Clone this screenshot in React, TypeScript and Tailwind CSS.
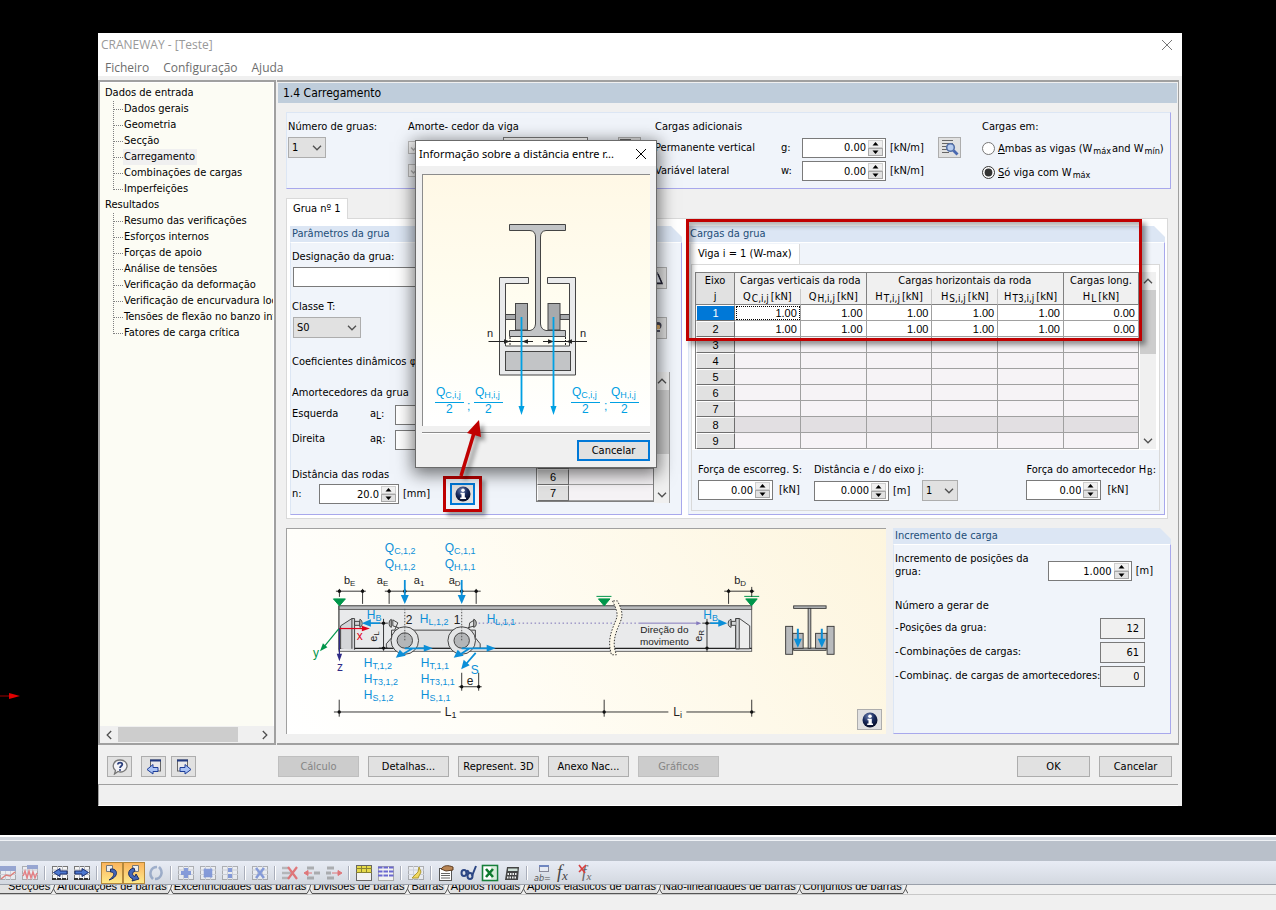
import { Fragment, useState } from "react";
import type { ReactNode } from "react";
import clsx from "clsx";

const inputNodes = ["Dados gerais", "Geometria", "Secção", "Carregamento", "Combinações de cargas", "Imperfeições"];
const resultNodes = [
  "Resumo das verificações",
  "Esforços internos",
  "Forças de apoio",
  "Análise de tensões",
  "Verificação da deformação",
  "Verificação de encurvadura local",
  "Tensões de flexão no banzo inf",
  "Fatores de carga crítica",
];

const axisColumns = [
  { name: "Q", sub: "C,i,j" },
  { name: "Q", sub: "H,i,j" },
  { name: "H", sub: "T,i,j" },
  { name: "H", sub: "S,i,j" },
  { name: "H", sub: "T3,i,j" },
  { name: "H", sub: "L" },
];

const axisRows = [
  ["1.00", "1.00", "1.00", "1.00", "1.00", "0.00"],
  ["1.00", "1.00", "1.00", "1.00", "1.00", "0.00"],
];

const sheetTabs = [
  "Secções",
  "Articulações de barras",
  "Excentricidades das barras",
  "Divisões de barras",
  "Barras",
  "Apoios nodais",
  "Apoios elásticos de barras",
  "Não-linearidades de barras",
  "Conjuntos de barras",
];

const face = "border border-[#adadad] bg-[#e1e1e1]";

function Chevron({ className }: { className?: string }) {
  return (
    <svg viewBox="0 0 10 6" className={clsx("w-[10px] h-[6px]", className)}>
      <path d="M1 0.8 L5 4.8 L9 0.8" fill="none" stroke="#505050" strokeWidth="1.3" />
    </svg>
  );
}

function Group({ title, className, children }: { title: string; className?: string; children: ReactNode }) {
  return (
    <fieldset className={clsx("relative flex min-w-0 flex-col", className)}>
      <h3 className="h-4 shrink-0 bg-[#dce6f4] px-[2px] text-[11px] leading-4 text-[#1e4e79] [clip-path:polygon(0_0,calc(100%-11px)_0,100%_11px,100%_100%,0_100%)]">
        {title}
      </h3>
      <div className="flex-1 border-r border-b border-l border-t border-t-white border-r-[#a8a8ec] border-b-[#a8a8ec] border-l-[#dce6f4] bg-[#f0f4fa]">
        {children}
      </div>
    </fieldset>
  );
}

function NumberField({ id, value, label, className }: { id: string; value: string; label?: string; className: string }) {
  const [text, setText] = useState(value);
  const step = (delta: number) => {
    const digits = text.split(".")[1]?.length ?? 0;
    setText((Number(text) + delta).toFixed(digits));
  };
  return (
    <div className={clsx("flex h-5 shrink-0 items-center border border-[#7a7a7a] bg-white pr-[2px]", className)}>
      <input
        id={id}
        aria-label={label}
        value={text}
        onChange={(e) => setText(e.target.value)}
        className="h-full w-0 min-w-0 flex-1 pr-[2px] text-right outline-none"
      />
      <div className="flex h-4 w-[15px] flex-col">
        <button type="button" aria-label="Aumentar" onClick={() => step(1)} className="flex h-2 items-center justify-center border border-[#cfcfcf] bg-[#f0f0f0]">
          <svg viewBox="0 0 7 4" className="h-1 w-[7px]"><path d="M3.5 0 L6.5 3.5 H0.5Z" fill="#000" /></svg>
        </button>
        <button type="button" aria-label="Diminuir" onClick={() => step(-1)} className="flex h-2 items-center justify-center border border-[#a8a8a8] bg-[#e1e1e1]">
          <svg viewBox="0 0 7 4" className="h-1 w-[7px]"><path d="M3.5 4 L6.5 0.5 H0.5Z" fill="#000" /></svg>
        </button>
      </div>
    </div>
  );
}

function Dropdown({ id, options, label, className }: { id: string; options: string[]; label?: string; className: string }) {
  return (
    <div className={clsx("relative h-[21px] shrink-0", className)}>
      <select id={id} aria-label={label} className={clsx("h-full w-full appearance-none pl-[3px] outline-none", face)}>
        {options.map((o) => (
          <option key={o}>{o}</option>
        ))}
      </select>
      <Chevron className="pointer-events-none absolute top-2 right-1" />
    </div>
  );
}

function DisabledCheck({ label, className }: { label: string; className?: string }) {
  return (
    <div className={clsx("relative size-[13px]", className)}>
      <input type="checkbox" aria-label={label} defaultChecked disabled className="block size-[13px] appearance-none border border-[#bcbcbc] bg-[#f6f6f6]" />
      <svg viewBox="0 0 13 13" className="absolute inset-0 size-[13px]"><path d="M3 6.5L5.5 9L10.500 4" fill="none" stroke="#b0b0b0" strokeWidth="1.400" /></svg>
    </div>
  );
}

function InfoIcon() {
  return (
    <svg viewBox="0 0 16 16" className="size-4">
      <defs>
        <radialGradient id="infoBall" cx="0.4" cy="0.25" r="0.8">
          <stop offset="0" stopColor="#6a7fb0" />
          <stop offset="0.5" stopColor="#182a5c" />
          <stop offset="1" stopColor="#050a20" />
        </radialGradient>
      </defs>
      <circle cx="8" cy="8" r="7.5" fill="url(#infoBall)" />
      <circle cx="8" cy="4.2" r="1.8" fill="#fff" />
      <path d="M5.500 6.800H9.800V11.500H11V13H5.200V11.500H6.500V8.200H5.500Z" fill="#fff" />
    </svg>
  );
}

function LoupeIcon() {
  return (
    <svg viewBox="0 0 18 17" className="h-[17px] w-[18px]">
      <path d="M1 1.500H12M1 4.500H12M1 7.500H7M1 10.500H6M1 13.500H8" stroke="#666" strokeWidth="1.200" />
      <circle cx="9.500" cy="8.500" r="3.800" fill="#b7cdf0" stroke="#5470a8" strokeWidth="1.600" />
      <path d="M12.500 11.500L16.500 15.500" stroke="#4968b0" strokeWidth="2.800" />
    </svg>
  );
}

function TreeBranch({ title, items }: { title: string; items: string[] }) {
  return (
    <li>
      <a href="#" className="block h-4 pl-[5px]">{title}</a>
      <ul className="pl-3">
        {items.map((item, i) => (
          <li key={item} className="flex h-4">
            <svg viewBox="0 0 11 16" className="h-4 w-[11px] shrink-0" stroke="#808080" strokeDasharray="1 1">
              <path d={i === items.length - 1 ? "M1.5 0V9" : "M1.5 0V16"} />
              <path d="M2 8.5H11" />
            </svg>
            <a href="#" className={clsx("px-px whitespace-nowrap", item === "Carregamento" && "bg-[#f0f0f0] pr-[2px]")}>{item}</a>
          </li>
        ))}
      </ul>
    </li>
  );
}

function Sym({ x, y, name, sub, fill, size = 12 }: { x: number; y: number; name: string; sub?: string; fill?: string; size?: number }) {
  return (
    <text x={x} y={y} fontSize={size} fill={fill}>
      {name}
      {sub && <tspan fontSize={size - 3} dy="2">{sub}</tspan>}
    </text>
  );
}

const blue = "#0c8fd8";

function CranewayDrawing() {
  return (
    <svg viewBox="0 0 600 205" preserveAspectRatio="xMinYMin meet" className="h-[205px] w-full" fontFamily="Liberation Sans, Arial, sans-serif" fill="#222">
      {/* runway beam */}
      <rect x="52" y="77" width="413.5" height="45.5" fill="#e9eaeb" stroke="#444" strokeWidth="0.8" />
      <rect x="52" y="77" width="413.5" height="3.5" fill="#b9bbbd" stroke="#444" strokeWidth="0.8" />
      <path d="M52 119.5H465.5" stroke="#222" strokeWidth="1.2" />
      <path d="M188 94.3H352" stroke="#7c72b8" strokeDasharray="1.5 2.5" />
      <path d="M352 94.3H411" stroke="#8478bd" />
      <path d="M415 94.3L410 92.3V96.3Z" fill="#8478bd" />
      <path d="M326 72C334 88 330 88 326 100C323 108 322 116 325 126L330 126C326 116 328 108 331 100C336 88 338 86 331 72Z" fill="#fdf8e8" stroke="#333" strokeDasharray="1.5 1.5" />

      {/* end stops */}
      <g fill="#d4d6d8" stroke="#333" strokeWidth="0.9">
        <path d="M53.7 120V97L65 89.7H67.7V121M65 89.7V120" />
        <path d="M67.7 92.5H73V96.5H67.7Z" />
        <path d="M73 90.5C76 91 76 98 73 98.5Z" />
        <path d="M449.5 120V89.7H453.3L463.5 97V120Z" fill="#eee" />
        <path d="M449.5 120V89.7H453V120Z" />
        <path d="M449.5 92.5H445V96.5H449.5M444.8 90.5C441 91 441 98 444.8 98.5Z" />
      </g>
      <path d="M52 77V121" stroke="#555" />

      {/* trolley */}
      <g stroke="#333" strokeWidth="0.9" fill="#e4e5e6">
        <path d="M104.7 101.3H188.7V109L193.5 115V119.3H99.5V115L104.7 109Z" fill="#dfe0e1" />
        <path d="M108 101L111 94L106 91V97L112 99M182 101L183 94L188 91V97L181 99" />
        <path d="M104.5 90.5C101.5 91 101.5 98 104.5 98.5ZM187 90.5C190.5 91 190.5 98 187 98.5Z" fill="#bbb" />
        <circle cx="118" cy="111.7" r="13.8" />
        <circle cx="175" cy="111.7" r="13.8" />
        <circle cx="118" cy="111.7" r="7.7" fill="#b4b6b8" />
        <circle cx="175" cy="111.7" r="7.7" fill="#b4b6b8" />
      </g>
      <path d="M118 80V112M175 80V112" stroke="#555" strokeDasharray="1.5 1.5" />

      {/* supports */}
      <g fill="#00964a" stroke="#00964a">
        <path d="M46.5 70H58.5L52.5 77Z" />
        <path d="M312 70H323.500L317.700 77ZM459.500 70H471L465.300 77Z" />
        <path d="M310 67.500H325M458 67.500H473" />
      </g>

      {/* local axes */}
      <g strokeWidth="1.2">
        <path d="M52 99.700H76" stroke="#e2001a" />
        <path d="M83 99.700L75 97V102.500Z" fill="#e2001a" />
        <path d="M52 99.700L37 118" stroke="#00964a" />
        <path d="M33 122.500L36 114.500L40.500 118.500Z" fill="#00964a" />
        <path d="M52.500 99.700V126" stroke="#2f2a86" />
        <path d="M52.500 132.500L49.800 125H55.200Z" fill="#2f2a86" />
      </g>
      <Sym x={70} y={111} name="x" fill="#e2001a" />
      <Sym x={26} y={128} name="y" fill="#00964a" />
      <Sym x={50} y={142} name="z" fill="#2f2a86" />

      {/* dimension lines */}
      <g stroke="#222" strokeWidth="0.900">
        <path d="M49 62.300H79M52.500 60V68M75.700 60V75M98 62.300H194M102.300 60V75M189.500 60V75M118 60V65M175 60V65" />
        <path d="M438 62.300H468M442.300 60V75M465.500 58V68" />
        <path d="M96.700 90V122M92 94.300H101M92 119.300H101M420.700 90V123M416 94.300H425" />
        <path d="M175 144V162M192 144V162M172 158H195" />
        <path d="M47 183.300H154M173 183.300H382M400 183.300H469M52.300 171V188M317.700 171V188M465.500 171V188" />
      </g>
      <g fill="#111">
        {[[52.5, 62.3], [75.7, 62.3], [102.3, 62.3], [118, 62.3], [175, 62.3], [189.5, 62.3], [442.3, 62.3], [465.5, 62.3], [96.7, 94.3], [96.7, 119.3], [420.7, 94.3], [420.7, 119.3], [175, 158], [192, 158], [52.3, 183.3], [317.7, 183.3], [465.5, 183.3]].map(([x, y]) => (
          <circle key={`${x}-${y}`} cx={x} cy={y} r="1.7" />
        ))}
      </g>
      <Sym x={57} y={55} name="b" sub="E" size={11} />
      <Sym x={90} y={55} name="a" sub="E" size={11} />
      <Sym x={127} y={55} name="a" sub="1" size={11} />
      <Sym x={162} y={55} name="a" sub="D" size={11} />
      <Sym x={448} y={55} name="b" sub="D" size={11} />
      <Sym x={119} y={95} name="2" />
      <Sym x={167} y={95} name="1" />
      <Sym x={180} y={156} name="e" />
      <Sym x={158} y={187} name="L" sub="1" />
      <Sym x={387} y={187} name="L" sub="i" />
      <g transform="translate(90 113) rotate(-90)"><Sym x={0} y={0} name="e" sub="L" size={11} /></g>
      <g transform="translate(416 113) rotate(-90)"><Sym x={0} y={0} name="e" sub="R" size={11} /></g>
      <text x="378" y="104" fontSize="10" textAnchor="middle">Direção do</text>
      <text x="378" y="116" fontSize="10" textAnchor="middle">movimento</text>

      {/* loads */}
      <g stroke={blue} strokeWidth="1.800">
        <path d="M118 51V67M175 51V67M93 94.300H83M424 94.300H433M118 119.500H138M175 119.500H201M126 119.500L115 126M183 119.500L173 126M189 124L180 134.500" />
      </g>
      <g fill={blue}>
        <path d="M118 75L114 66H122ZM175 75L171 66H179ZM75 94.300L84 90.500V98ZM441 94.300L432 90.500V98ZM146 119.500L137 116V123ZM209 119.500L200 116V123ZM109 129L113 121L119 127ZM167 129L171 121L177 127ZM174.500 140.500L177 131L183 136.500Z" />
      </g>
      <g fill={blue}>
        <Sym x={98} y={23} name="Q" sub="C,1,2" />
        <Sym x={98} y={39} name="Q" sub="H,1,2" />
        <Sym x={158} y={23} name="Q" sub="C,1,1" />
        <Sym x={158} y={39} name="Q" sub="H,1,1" />
        <Sym x={80} y={90} name="H" sub="B" />
        <Sym x={417} y={90} name="H" sub="B" />
        <Sym x={133} y={94} name="H" sub="L,1,2" />
        <Sym x={200} y={94} name="H" sub="L,1,1" />
        <Sym x={184} y={145} name="S" />
        <Sym x={77} y={138} name="H" sub="T,1,2" />
        <Sym x={77} y={154} name="H" sub="T3,1,2" />
        <Sym x={77} y={170} name="H" sub="S,1,2" />
        <Sym x={134} y={138} name="H" sub="T,1,1" />
        <Sym x={134} y={154} name="H" sub="T3,1,1" />
        <Sym x={134} y={170} name="H" sub="S,1,1" />
      </g>

      {/* cross-section */}
      <g fill="#b9bbbd" stroke="#333" strokeWidth="0.900">
        <rect x="507.500" y="77" width="32.500" height="2.500" />
        <rect x="507.500" y="119.300" width="32.500" height="2.200" />
        <rect x="522" y="79.500" width="2.700" height="40" />
        <rect x="506.500" y="104.500" width="10.500" height="15" />
        <rect x="529.500" y="104.500" width="11.500" height="15" />
        <rect x="499.500" y="97.500" width="7" height="28" />
        <rect x="541" y="97.500" width="7" height="28" />
      </g>
      <path d="M511.700 100V112M535.700 100V112" stroke={blue} strokeWidth="2" />
      <path d="M511.700 119L507.700 110H515.700ZM535.700 119L531.700 110H539.700Z" fill={blue} />
    </svg>
  );
}

function WheelDrawing() {
  return (
    <svg viewBox="0 0 227 251" preserveAspectRatio="xMinYMin meet" className="block h-[251px] w-full" fontFamily="Liberation Sans, Arial, sans-serif" fill="#222">
      <g stroke="#444">
        <path d="M76.500 102.500H105.500V108.500H82.500V171H146.500V108.500H124.500V102.500H152.500V200H76.500Z" fill="#e9eaeb" />
        <rect x="82.500" y="176.500" width="65" height="19" fill="#c2c4c6" />
        <rect x="82.500" y="139.500" width="10" height="5" fill="#a8aaac" />
        <rect x="137" y="139.500" width="9.500" height="5" fill="#a8aaac" />
        <rect x="92.500" y="128.500" width="12" height="26.500" fill="#a8aaac" />
        <rect x="125" y="128.500" width="12" height="26.500" fill="#a8aaac" />
        <path d="M86.500 49.500H142.500V55.500H123Q117.500 56 117.500 62V149Q118 154.500 123 155.500H142.500V161.500H86.500V155.500H107Q112 154.500 112.500 149V62Q112.500 56 107 55.500H86.500Z" fill="#c2c4c6" />
      </g>
      <path d="M65.500 166.500H110M120 166.500H164" stroke="#222" />
      <path d="M87 162V171M142.500 162V171" stroke="#222" strokeDasharray="2 1" />
      <path d="M87 166.500L81 164.300V168.700ZM99 166.500L105 164.300V168.700ZM131 166.500L125 164.300V168.700ZM143 166.500L149 164.300V168.700Z" />
      <text x="64" y="162" fontSize="11">n</text>
      <text x="157" y="162" fontSize="11">n</text>
      <path d="M98.500 142V232M130.500 142V232" stroke="#00a0e3" strokeWidth="1.800" />
      <path d="M98.500 240L95.500 231H101.500ZM130.500 240L127.500 231H133.500Z" fill="#00a0e3" />
      <g fill="#00a0e3">
        {[{ x: 12, s: "C,i,j" }, { x: 51, s: "H,i,j" }, { x: 148, s: "C,i,j" }, { x: 187, s: "H,i,j" }].map((f) => (
          <Fragment key={f.x}>
            <Sym x={f.x + 1} y={221} name="Q" sub={f.s} />
            <path d={`M${f.x} 227.5H${f.x + 29}`} stroke="#00a0e3" />
            <text x={f.x + 11} y="238" fontSize="12">2</text>
          </Fragment>
        ))}
        <text x="44" y="235" fontSize="12">;</text>
        <text x="181" y="235" fontSize="12">;</text>
      </g>
    </svg>
  );
}

function InfoDialog({ onClose }: { onClose: () => void }) {
  return (
    <div role="dialog" aria-label="Informação sobre a distância" className="absolute top-[107px] left-[317px] w-[242px] border border-[#6b6b6b] bg-[#f0f0f0] pb-[6px] shadow-[0_4px_16px_2px_rgba(0,0,0,0.55)]">
      <div className="flex h-[25px] items-center justify-between bg-white pr-[10px] pl-[3px] font-['Noto_Sans','Segoe_UI',sans-serif] text-[11px]">
        <span className="whitespace-nowrap">Informação sobre a distância entre r...</span>
        <button type="button" aria-label="Fechar" onClick={onClose}>
          <svg viewBox="0 0 10 10" className="size-[10px]"><path d="M0 0L10 10M10 0L0 10" stroke="#000" /></svg>
        </button>
      </div>
      <div className="mx-[6px] mt-2 border-t border-l border-[#8c8c8c] bg-linear-to-t from-white via-[#fffdf0] to-[#fff8e6]">
        <WheelDrawing />
      </div>
      <div className="mx-[6px] mt-[6px] border-t border-[#8c8c8c] border-b border-b-white" />
      <div className="mt-[6px] flex justify-end px-[6px]">
        <button type="button" onClick={onClose} className="h-[21px] w-[73px] border-2 border-[#0078d7] bg-[#e1e1e1] leading-[17px]">Cancelar</button>
      </div>
    </div>
  );
}

function TopLoads() {
  return (
    <section className="mt-[9px] grid h-[77px] grid-cols-[120px_247px_327px_1fr] border-t border-r border-b border-l border-t-[#dce6f4] border-r-[#a8a8ec] border-b-[#a8a8ec] border-l-[#dce6f4] bg-[#f0f4fa] pt-[6px] pl-px">
      <div>
        <label htmlFor="cranes" className="block h-[18px]">Número de gruas:</label>
        <Dropdown id="cranes" options={["1", "2", "3"]} className="w-[38px]" />
      </div>
      <div>
        <span className="block h-[18px]">Amorte- cedor da viga</span>
        <div className="flex">
          <DisabledCheck label="Esquerda da viga" className="mt-1" />
          <div className="ml-[82px] h-5 w-[85px] border border-[#7a7a7a] bg-white" />
          <div className={clsx("ml-[30px] h-[21px] w-[23px]", face)}><LoupeIcon /></div>
        </div>
        <DisabledCheck label="Direita da viga" className="mt-[6px]" />
      </div>
      <div>
        <span className="block h-[18px]">Cargas adicionais</span>
        <div className="flex items-center">
          <label htmlFor="g" className="flex w-[147px]"><span className="w-[126px]">Permanente vertical</span>g:</label>
          <NumberField id="g" value="0.00" className="w-[84px]" />
          <span className="ml-1 w-12">[kN/m]</span>
          <button type="button" aria-label="Detalhes da carga" className={clsx("flex h-[21px] w-[23px] items-center justify-center", face)}>
            <LoupeIcon />
          </button>
        </div>
        <div className="mt-[3px] flex items-center">
          <label htmlFor="w" className="flex w-[147px]"><span className="w-[126px]">Variável lateral</span>w:</label>
          <NumberField id="w" value="0.00" className="w-[84px]" />
          <span className="ml-1">[kN/m]</span>
        </div>
      </div>
      <div className="whitespace-nowrap">
        <span className="block h-[22px]">Cargas em:</span>
        <label className="flex h-6 items-start">
          <input type="radio" name="beams" className="mt-px mr-[3px] size-[13px]" />
          <span><u>A</u>mbas as vigas (W<sub className="mx-px text-[9px]">máx</sub>and W<sub className="ml-px text-[9px]">mín</sub>)</span>
        </label>
        <label className="flex h-6 items-start">
          <input type="radio" name="beams" defaultChecked className="mt-px mr-[3px] size-[13px] accent-[#333]" />
          <span><u>S</u>ó viga com W<sub className="ml-px text-[9px]">máx</sub></span>
        </label>
      </div>
    </section>
  );
}

function ScrollColumn({ className }: { className?: string }) {
  return (
    <div className={clsx("flex w-4 flex-col items-center bg-[#f0f0f0]", className)}>
      <Chevron className="my-[6px] rotate-180" />
      <div className="h-16 w-full bg-[#cdcdcd]" />
      <Chevron className="mt-auto mb-[5px]" />
    </div>
  );
}

const rowHead = "h-4 border border-t-white border-l-white border-r-[#6e6e6e] border-b-[#6e6e6e] bg-[#e1e1e1] text-center font-normal";

function CraneParameters() {
  return (
    <Group title="Parâmetros da grua" className="w-[392px] shrink-0">
      <div className="px-px pt-[6px] pb-[9px]">
        <label htmlFor="name" className="block h-[18px]">Designação da grua:</label>
        <div className="flex h-[22px] items-start justify-between pr-[13px] pl-px">
          <input id="name" className="h-5 w-[330px] border border-[#7a7a7a] bg-white px-1" />
          <button type="button" aria-label="Nova grua" className={clsx("flex h-[22px] w-6 items-center justify-center", face)}>
            <svg viewBox="0 0 16 14" className="h-[14px] w-4"><path d="M5 1H10L15 12H5Z" fill="#e8ecf6" stroke="#556" /><path d="M11 3L15 12.500H8" stroke="#223" strokeWidth="1.500" fill="none" /></svg>
          </button>
        </div>
        <div className="mt-[10px] flex justify-between pr-6">
          <label htmlFor="class" className="block h-[18px]">Classe T:</label>
          <span>:</span>
        </div>
        <div className="flex items-start justify-between pr-[13px] pl-px">
          <Dropdown id="class" options={["S0", "S1", "S2", "S3"]} className="w-[68px]" />
          <button type="button" aria-label="Biblioteca" className={clsx("flex h-[22px] w-6 items-center justify-center", face)}>
            <svg viewBox="0 0 16 14" className="h-[14px] w-4"><circle cx="11" cy="4.500" r="3.500" fill="#445" /><circle cx="11" cy="6" r="2.200" fill="#e8b36a" /><path d="M5 9H13V11H9V14H7V11H5Z" fill="#556" /></svg>
          </button>
        </div>
        <div className="flex justify-between pr-[10px]">
          <div className="pt-[15px]">
            <p className="h-[31px]">Coeficientes dinâmicos φ</p>
            <p className="h-5">Amortecedores da grua</p>
            <div className="mb-[5px] flex items-center">
              <label htmlFor="aL" className="flex w-[103px]"><span className="w-[78px]">Esquerda</span>a<small className="mt-[2px] text-[10px]">L</small>:</label>
              <NumberField id="aL" value="0.000" className="w-20" />
            </div>
            <div className="flex items-center">
              <label htmlFor="aR" className="flex w-[103px]"><span className="w-[78px]">Direita</span>a<small className="mt-[2px] text-[10px]">R</small>:</label>
              <NumberField id="aR" value="0.000" className="w-20" />
            </div>
            <p className="mt-[17px] h-4">Distância das rodas</p>
            <div className="flex items-center">
              <label htmlFor="n" className="w-[27px]">n:</label>
              <NumberField id="n" value="20.0" className="w-20" />
              <span className="ml-1 w-[47px]">[mm]</span>
              <div className="relative">
                <button type="button" aria-label="Informação" className="flex h-[22px] w-[25px] items-center justify-center border-2 border-[#0078d7] bg-[#e1e1e1]">
                  <InfoIcon />
                </button>
                <div className="pointer-events-none absolute -inset-[7px] border-3 border-[#c00000] shadow-[4px_4px_4px_rgba(0,0,0,0.35)]" />
              </div>
            </div>
          </div>
          <div className="mt-[33px] flex h-[131px]">
            <table className="h-[130px] w-[118px] table-fixed border-separate border-spacing-0 border border-[#808080] font-['Liberation_Sans',Arial,sans-serif] leading-[14px]">
              <tbody>
                {["j", "1", "2", "3", "4", "5", "6", "7"].map((r) => (
                  <tr key={r}>
                    <th scope="row" className={clsx(rowHead, "w-8")}>{r}</th>
                    <td className="border-b border-[#a0a0a0] bg-[#f6f3f6]" />
                  </tr>
                ))}
              </tbody>
            </table>
            <ScrollColumn className="border-r border-[#a0a0a0]" />
          </div>
        </div>
      </div>
    </Group>
  );
}

function CraneLoads() {
  return (
    <Group title="Cargas da grua" className="min-w-[470px] flex-1">
      <div className="flex h-full flex-col pt-px pr-1 pb-[3px] pl-[2px]">
        <div className="flex h-5">
          <button type="button" role="tab" aria-selected="true" className="border-r border-[#d9d9d9] bg-white px-[7px]">Viga i = 1 (W-max)</button>
        </div>
        <div className="flex-1 border border-t-[#d9d9d9] border-[#d9d9d9] bg-[#f0f4fa]">
          <div className="flex bg-white pt-[7px] pr-[3px] pb-px pl-[3px]">
            <div className="min-w-0 flex-1">
              <table className="w-full table-fixed border-separate border-spacing-0 border-t border-l border-[#808080] bg-[#f6f3f6] font-['Liberation_Sans',Arial,sans-serif] text-[11px] leading-[14px]">
                <colgroup>
                  <col className="w-[39px]" />
                  <col /><col /><col /><col /><col />
                  <col className="w-[75px]" />
                </colgroup>
                <thead className="bg-[#f0f0f0] font-['DejaVu_Sans_Condensed',Tahoma,sans-serif]">
                  <tr className="h-4">
                    <th className="border-r border-[#808080] bg-[#e1e1e1] font-normal">Eixo</th>
                    <th colSpan={2} className="border-r border-[#808080] font-normal whitespace-nowrap">Cargas verticais da roda</th>
                    <th colSpan={3} className="border-r border-[#808080] font-normal">Cargas horizontais da roda</th>
                    <th className="border-r border-[#808080] font-normal whitespace-nowrap">Cargas long.</th>
                  </tr>
                  <tr className="h-4">
                    <th className="border-r border-b border-[#808080] bg-[#e1e1e1] font-normal">j</th>
                    {axisColumns.map((c, i) => (
                      <th key={c.name + c.sub} className={clsx("border-r border-b border-[#808080] font-normal whitespace-nowrap", (i === 0 || i === 2 || i === 3) && "border-r-[#c8c8c8]")}>
                        {c.name}<sub className="mr-[2px] ml-px text-[10px]">{c.sub}</sub>[kN]
                      </th>
                    ))}
                  </tr>
                </thead>
                <tbody>
                  {Array.from({ length: 9 }, (_, r) => (
                    <tr key={r} className={clsx(r < 2 && "bg-white", r === 7 && "bg-[#e2dfe2]")}>
                      <th scope="row" className={clsx(rowHead, r === 0 && "!bg-[#0078d7] text-white")}>{r + 1}</th>
                      {axisColumns.map((c, i) => (
                        <td key={c.name + c.sub} className={clsx("border-r border-b border-[#a0a0a0] pr-[3px] text-right", r === 0 && i === 0 && "outline-1 -outline-offset-2 outline-black outline-dotted")}>
                          {axisRows[r]?.[i]}
                        </td>
                      ))}
                    </tr>
                  ))}
                </tbody>
              </table>
            </div>
            <ScrollColumn className="ml-px" />
          </div>
          <div className="flex pt-3 pl-[6px]">
            <div className="w-[116px]">
              <label htmlFor="slip" className="block h-[18px] whitespace-nowrap">Força de escorreg. S:</label>
              <div className="flex items-center">
                <NumberField id="slip" value="0.00" className="w-[75px]" />
                <span className="ml-[6px]">[kN]</span>
              </div>
            </div>
            <div>
              <label htmlFor="dist" className="block h-[18px] whitespace-nowrap">Distância e / do eixo j:</label>
              <div className="flex items-center">
                <NumberField id="dist" value="0.000" className="w-[75px]" />
                <span className="ml-1 w-[29px]">[m]</span>
                <Dropdown id="axis" label="Eixo j" options={["1", "2"]} className="w-9" />
              </div>
            </div>
            <div className="mr-[3px] ml-auto">
              <label htmlFor="buffer" className="block h-[18px] whitespace-nowrap">Força do amortecedor H<sub className="ml-px text-[9px]">B</sub>:</label>
              <div className="flex items-center">
                <NumberField id="buffer" value="0.00" className="w-[75px]" />
                <span className="ml-[6px]">[kN]</span>
              </div>
            </div>
          </div>
        </div>
      </div>
      <div className="pointer-events-none absolute -top-[7px] right-[23px] -left-[2px] h-[122px] border-3 border-[#c00000] shadow-[4px_4px_5px_rgba(0,0,0,0.4),inset_4px_4px_5px_rgba(0,0,0,0.3)]" />
    </Group>
  );
}

function LoadIncrement() {
  const counts = [
    { id: "positions", label: "Posições da grua:", value: "12" },
    { id: "combos", label: "Combinações de cargas:", value: "61" },
    { id: "bufferCombos", label: "Combinaç. de cargas de amortecedores:", value: "0" },
  ];
  return (
    <Group title="Incremento de carga" className="w-[278px] shrink-0">
      <div className="pt-[7px] pr-[25px] pl-px">
        <div className="flex h-9 items-start justify-between">
          <label htmlFor="step" className="w-[152px] leading-[13px]">Incremento de posições da grua:</label>
          <div className="-mr-2 flex items-center pt-[9px]">
            <NumberField id="step" value="1.000" className="w-[84px]" />
            <span className="ml-1">[m]</span>
          </div>
        </div>
        <p className="mt-[10px] h-[18px]">Número a gerar de</p>
        {counts.map((c) => (
          <div key={c.id} className="flex h-6 items-center justify-between">
            <label htmlFor={c.id} className="whitespace-nowrap"><span className="mr-px">-</span>{c.label}</label>
            <input id={c.id} readOnly value={c.value} className="h-[21px] w-[45px] border border-[#7a7a7a] bg-[#f0f0f0] pr-[5px] text-right" />
          </div>
        ))}
      </div>
    </Group>
  );
}

function Footer() {
  const button = "h-[21px] border text-center";
  return (
    <>
      <div className="flex items-center pt-[11px] pr-[10px] pb-[7px] pl-[9px]">
        <button type="button" aria-label="Ajuda" className={clsx("mr-[9px] flex h-[21px] w-[25px] items-center justify-center", face)}>
          <svg viewBox="0 0 16 16" className="size-4">
            <path d="M8 1A6.500 6 0 1 1 6 12.500L2.500 15L3.500 11.500A6.500 6 0 0 1 8 1Z" fill="#f4f4f8" stroke="#777" strokeWidth="1.300" />
            <path d="M5.800 5.500C6 3 10.300 3 10.300 5.500C10.300 7 8 7 8 9" fill="none" stroke="#2b3f7c" strokeWidth="1.800" />
            <circle cx="8" cy="11" r="1" fill="#2b3f7c" />
          </svg>
        </button>
        {["Página anterior", "Página seguinte"].map((name, i) => (
          <button key={name} type="button" aria-label={name} className={clsx("mr-[5px] flex h-[21px] w-[25px] items-center justify-center", face)}>
            <svg viewBox="0 0 16 16" className="size-4">
              <rect x={i ? 1.5 : 4.5} y="1" width="10" height="11" fill="#e8e8ea" stroke="#666" />
              <path d={i ? "M1 1.5H12" : "M4 1.5H15"} stroke="#223a80" strokeWidth="2" />
              <path d={i ? "M4 8.500H9V5.500L15 10.500L9 15V12.500H4Z" : "M12 8.500H7V5.500L1 10.500L7 15V12.500H12Z"} fill="#a9c2f4" stroke="#1f3f9a" />
            </svg>
          </button>
        ))}
        <div className="ml-[77px] flex flex-1 gap-[9px]">
          {["Cálculo", "Detalhas...", "Represent. 3D", "Anexo Nac...", "Gráficos"].map((b) => {
            const off = b === "Cálculo" || b === "Gráficos";
            return (
              <button key={b} type="button" disabled={off} className={clsx(button, "w-[81px] whitespace-nowrap", off ? "border-[#bfbfbf] bg-[#cccccc] text-[#858585]" : "border-[#adadad] bg-[#e1e1e1]")}>
                {b}
              </button>
            );
          })}
        </div>
        <div className="flex gap-[9px]">
          <button type="button" className={clsx(button, "w-[73px] border-[#adadad] bg-[#e1e1e1]")}>OK</button>
          <button type="button" className={clsx(button, "w-[73px] border-[#adadad] bg-[#e1e1e1]")}>Cancelar</button>
        </div>
      </div>
      <div className="mr-1 h-[22px] border-t border-l border-[#a0a0a0] border-b border-b-white" />
    </>
  );
}

function Sheet({ soft, children }: { soft?: boolean; children?: ReactNode }) {
  return (
    <g opacity={soft ? 0.5 : 1}>
      <rect x="0.500" y="1.500" width="15" height="13" fill="#f6f6f6" stroke="#777" />
      <path d="M0 5H16M0 9.500H16M5.500 1V15M10.500 1V15" stroke="#b9bcc4" />
      {children}
    </g>
  );
}

const tableHead = (color: string) => <path d="M0 1H16V6H0Z" fill={color} />;

const toolGroups: { name: string; active?: boolean; art: ReactNode }[][] = [
  [
    { name: "Diagrama", art: <Sheet soft>{tableHead("#4d66b5")}<path d="M1 14L6 10L10 11L15 7" stroke="#d21" fill="none" strokeWidth="1.500" /></Sheet> },
    { name: "Resultados", art: <Sheet soft><path d="M5 0H16V4H5Z" fill="#4d66b5" /><path d="M1 11L3 6L5 13L7 6L9 13L11 7L13 13L15 8" stroke="#e22" fill="none" strokeWidth="1.400" /></Sheet> },
  ],
  [
    { name: "Tabela anterior", art: <Sheet><path d="M0 14H16" stroke="#333" strokeWidth="2" strokeDasharray="4 1" /><path d="M15 6H8V3.500L1.500 7.500L8 11.500V9H15Z" fill="#4d78d0" stroke="#1a2f70" /></Sheet> },
    { name: "Tabela seguinte", art: <Sheet><path d="M0 14H16" stroke="#333" strokeWidth="2" strokeDasharray="4 1" /><path d="M1 6H8V3.500L14.500 7.500L8 11.500V9H1Z" fill="#4d78d0" stroke="#1a2f70" /></Sheet> },
  ],
  [
    { name: "Sincronizar gráfico", active: true, art: <><path d="M2.500 0.500H8.500V6.500H2.500Z" fill="#eee" stroke="#777" /><path d="M6.500 4C14 3 15.500 12 5 15C11 11 11 7 6.500 7Z" fill="#4466b8" stroke="#1c2f66" /></> },
    { name: "Sincronizar tabela", active: true, art: <><path d="M6.500 0.500H12.500V6.500H6.500Z" fill="#eee" stroke="#777" /><path d="M8 3C1 4 1 12 7 14L6 16L13 14L10 9L9 11.500C5.500 10.500 6 7 9 6Z" fill="#4466b8" stroke="#1c2f66" /></> },
    { name: "Atualizar", art: <g opacity="0.500" fill="none" stroke="#5c78a8" strokeWidth="2.500"><path d="M5 14C0 9 3 2 9 2M11 2C16 7 13 14 7 14" /></g> },
  ],
  [
    { name: "Inserir", art: <Sheet soft><path d="M8 3V13M3 8H13" stroke="#2f56c8" strokeWidth="4" /></Sheet> },
    { name: "Copiar", art: <Sheet soft><path d="M5 5H11V11H5ZM4 4L12 12M12 4L4 12" stroke="#2f56c8" strokeWidth="2.500" fill="#2f56c8" /></Sheet> },
    { name: "Colar", art: <Sheet soft><path d="M8 3V7M8 9V13" stroke="#2f56c8" strokeWidth="4" /></Sheet> },
  ],
  [{ name: "Limpar", art: <Sheet soft><path d="M4 3L12 13M12 3L4 13" stroke="#2f56c8" strokeWidth="2.500" /></Sheet> }],
  [
    { name: "Apagar", art: <g opacity="0.600"><path d="M0 3H6M0 8H9M0 13H6" stroke="#999" strokeWidth="2.500" /><path d="M6 2L15 14M15 2L6 14" stroke="#e03030" strokeWidth="2.200" /></g> },
    { name: "Inserir linha", art: <g opacity="0.600"><path d="M3 3H10M10 8H16M3 13H10" stroke="#888" strokeWidth="3" /><path d="M0 8L4 5.500V10.500ZM4 8H8" fill="#e03030" stroke="#e03030" /></g> },
    { name: "Remover linha", art: <g opacity="0.600"><path d="M1 3H8M0 8H5M1 13H8" stroke="#888" strokeWidth="3" /><path d="M16 8L12 5.500V10.500ZM6 8H12" fill="#e03030" stroke="#e03030" /></g> },
  ],
  [
    { name: "Cabeçalho", art: <><rect x="0.500" y="0.500" width="15" height="15" fill="#f2f2f2" stroke="#666" /><path d="M1 1H15V7H1Z" fill="#e6da4a" /><path d="M0 3.500H16M0 7.500H16M5.500 1V7M10.500 1V7" stroke="#8a8430" /></> },
    { name: "Linhas", art: <><rect x="0.500" y="1.500" width="15" height="14" fill="#f2f2f2" stroke="#aaa" /><path d="M0 2.500H16M0 6.500H16M0 10.500H16" stroke="#6a68d0" strokeWidth="2" strokeDasharray="4.500 1" /></> },
  ],
  [{ name: "Editar", art: <><Sheet soft /><path d="M4 13H10L13 7L11 2L10 7Z" fill="#f0d860" stroke="#b09a30" /></> }],
  [
    { name: "Propriedades", art: <><rect x="1.500" y="3.500" width="12" height="12" fill="#fff" stroke="#555" /><path d="M3 8.500H12M3 10.500H12M3 13H12" stroke="#666" /><path d="M3 4C6 0 10 0 15 2V5L8 6Z" fill="#b98656" stroke="#5b3b20" /></> },
    { name: "Procurar", art: <g fill="none" stroke="#2c4684" strokeWidth="2"><ellipse cx="4" cy="8" rx="2.500" ry="3" /><ellipse cx="10" cy="11" rx="2.500" ry="3" /><path d="M6.500 8C7 5 8 5 9 8M12 11L16 1" /></g> },
    { name: "Excel", art: <><rect x="0.500" y="0.500" width="15" height="15" fill="#fff" stroke="#17803a" strokeWidth="1.600" /><path d="M9 2H14V14H9Z" fill="#d7ecd9" /><path d="M4 4L11 12M11 4L4 12" stroke="#0f7a2e" strokeWidth="2.600" /></> },
    { name: "Calculadora", art: <><path d="M3 2H15L14 15H1Z" fill="#444" /><path d="M4 3.500H13.500V6H4Z" fill="#cfe0d8" /><path d="M3.500 9H13M3 12.500H13" stroke="#eee" strokeWidth="2" strokeDasharray="1.500 1" /></> },
  ],
  [
    { name: "Parâmetros", art: <><rect x="5.500" y="0.500" width="9" height="6" fill="#e6eaf2" stroke="#889" /><path d="M5 1H15" stroke="#6f86c0" strokeWidth="2" /><text x="0" y="16" fontSize="9" fontStyle="italic" fill="#555">ab=</text></> },
    { name: "Fórmula", art: <text x="1" y="13" fontSize="18" fontStyle="italic" fontFamily="Liberation Serif, serif" fill="#444">f<tspan dy="2" fontSize="13">x</tspan></text> },
    { name: "Apagar fórmula", art: <><text x="4" y="12" fontSize="16" fontStyle="italic" fontFamily="Liberation Serif, serif" fill="#666">f<tspan dy="3" fontSize="11">x</tspan></text><path d="M1 0L7 8M8 0L1 7" stroke="#d84040" strokeWidth="1.600" /></> },
  ],
];

function HostToolbar() {
  return (
    <footer className="mt-[29px] flex flex-1 flex-col bg-[#f0f0f0]">
      <div className="h-[6px] border-t-2 border-b border-t-white border-b-[#eef1f5] bg-[#d0d5dd]" />
      <div className="h-5 bg-[#b9c0ca]" />
      <div className="-ml-[3px] flex h-6 items-center border-b border-[#9aa0aa] bg-linear-to-b from-[#e8ecf5] to-[#d3d8e0]">
        {toolGroups.map((group, g) => (
          <Fragment key={g}>
            {g > 0 && <div className="flex w-2 shrink-0 justify-center"><div className="h-[14px] w-[2px] border-l border-[#a9aebb] bg-white" /></div>}
            {group.map((t) => (
              <button key={t.name} type="button" aria-label={t.name} className={clsx("flex size-[22px] shrink-0 items-center justify-center", t.active && "border border-[#b5883c] bg-linear-to-b from-[#fbb45c] to-[#fde88a]")}>
                <svg viewBox="0 0 16 16" className="size-4 overflow-visible">{t.art}</svg>
              </button>
            ))}
          </Fragment>
        ))}
      </div>
      <nav className="flex h-[10px] items-end overflow-hidden border-b border-[#c8c8c8] font-['Liberation_Sans',Arial,sans-serif] text-[11px] leading-[9px]">
        {sheetTabs.map((t) => (
          <Fragment key={t}>
            <a href="#" className="h-3 shrink-0 border-b border-[#555] bg-[#e1e1e1] px-px whitespace-nowrap first:pl-2">{t}</a>
            <svg viewBox="0 0 5 10" className="h-[10px] w-[5px] shrink-0"><path d="M0 9.500L2.500 5L5 9.500M2.500 5L4 0" fill="#f0f0f0" stroke="#555" /></svg>
          </Fragment>
        ))}
      </nav>
    </footer>
  );
}

export default function App() {
  const [dialogOpen, setDialogOpen] = useState(true);

  return (
    <div className="relative flex min-h-screen flex-col overflow-hidden bg-black font-['DejaVu_Sans_Condensed',Tahoma,'Noto_Sans',sans-serif] text-[11px] leading-4 text-black">
      <svg viewBox="0 0 20 8" className="absolute top-[692px] left-0 h-2 w-5"><path d="M0 4H12" stroke="#a00000" /><path d="M20 4L9 1V7Z" fill="#e00000" /></svg>

      <main className="relative mt-[33px] mr-[94px] ml-[98px] bg-[#f0f0f0]">
        <header className="bg-white pr-[10px] pl-[3px] font-['Open_Sans','Segoe_UI',sans-serif] text-[12px]">
          <div className="flex h-6 items-center justify-between text-[#999]">
            <h1>CRANEWAY - [Teste]</h1>
            <button type="button" aria-label="Fechar">
              <svg viewBox="0 0 10 10" className="size-[10px]"><path d="M0 0L10 10M10 0L0 10" stroke="#777" /></svg>
            </button>
          </div>
          <nav className="flex h-[19px] gap-[14px] pt-[3px] pl-1 text-[#6d6d6d]">
            <a href="#">Ficheiro</a>
            <a href="#">Configuração</a>
            <a href="#">Ajuda</a>
          </nav>
        </header>

        <div className="mt-1 flex">
          <aside className="flex w-[178px] shrink-0 flex-col border-2 border-[#a0a0a0]">
            <nav className="w-full flex-1 overflow-hidden border-t border-r border-white bg-[#fcfcf4] pt-[2px]">
              <ul>
                <TreeBranch title="Dados de entrada" items={inputNodes} />
                <TreeBranch title="Resultados" items={resultNodes} />
              </ul>
            </nav>
            <div className="flex h-[17px] items-center bg-[#f0f0f0] px-1">
              <Chevron className="rotate-90" />
              <div className="ml-1 h-[15px] w-[120px] bg-[#cdcdcd]" />
              <Chevron className="ml-auto -rotate-90" />
            </div>
          </aside>

          <div className="mr-[3px] ml-px min-w-0 flex-1 border-t-2 border-r border-b-2 border-[#a0a0a0] pb-[9px]">
            <h2 className="mt-px mr-px ml-px h-5 bg-[#bfcddb] pl-[5px] text-[12px] leading-5">1.4 Carregamento</h2>
            <div className="pr-[7px] pl-[9px]">
              <TopLoads />
              <div className="mt-[9px] mr-[3px]">
                <div className="flex h-5">
                  <button type="button" role="tab" aria-selected="true" className="-mb-px h-[21px] border border-b-0 border-[#d9d9d9] bg-white px-[6px]">Grua nº 1</button>
                </div>
                <div className="flex gap-[6px] border border-[#d9d9d9] bg-white pt-[7px] pr-[2px] pb-[3px] pl-[3px]">
                  <CraneParameters />
                  <CraneLoads />
                </div>
              </div>
              <div className="mt-[9px] flex gap-[7px]">
                <div className="relative min-w-0 flex-1 border-t border-l border-[#a0a0a0] bg-linear-[60deg,#ffffff_0%,#fffdf5_35%,#fdf5de_100%]">
                  <CranewayDrawing />
                  <button type="button" aria-label="Informação" className={clsx("absolute right-1 bottom-1 flex h-[21px] w-[25px] items-center justify-center", face)}>
                    <InfoIcon />
                  </button>
                </div>
                <LoadIncrement />
              </div>
            </div>
          </div>
        </div>

        <Footer />

        {dialogOpen && <InfoDialog onClose={() => setDialogOpen(false)} />}
        <svg viewBox="0 0 40 70" className="pointer-events-none absolute top-[380px] left-[352px] h-[70px] w-10 drop-shadow-[4px_4px_2px_rgba(0,0,0,0.4)]">
          <path d="M11 63L24 20" stroke="#c00000" strokeWidth="3.500" />
          <path d="M29 7L17 20L31 24Z" fill="#c00000" />
        </svg>
      </main>

      <HostToolbar />
    </div>
  );
}
